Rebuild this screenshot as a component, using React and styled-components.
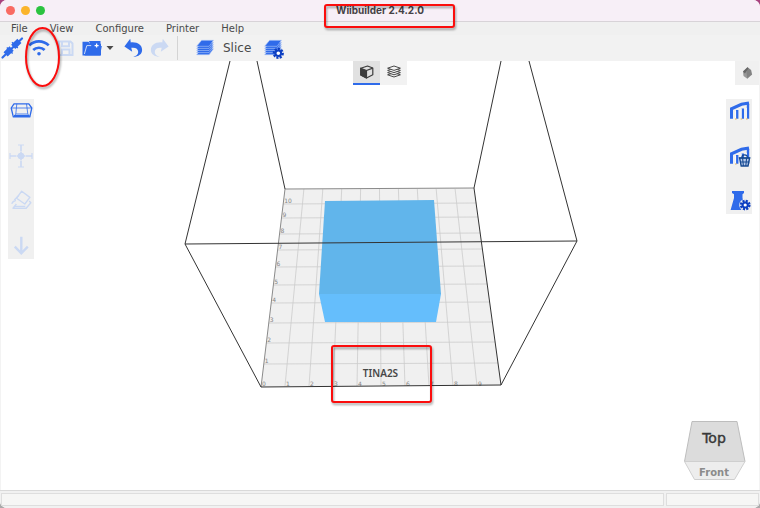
import React, { useState } from 'react';
import styled, { createGlobalStyle } from 'styled-components';

const BLUE = '#2f6bea';
const DARK_BLUE = '#0d3fc2';
const PALE = '#cbd9f3';

const GlobalStyle = createGlobalStyle`
    * {
        box-sizing: border-box;
    }
    body {
        margin: 0;
        background: linear-gradient(#a8437f 0, #a8437f 50%, #a9a9a9 50%);
        font-family: "DejaVu Sans", sans-serif;
        color: #4a4a4a;
    }
    button {
        font-family: inherit;
        color: inherit;
        border: 0;
        padding: 0;
        background: none;
        cursor: pointer;
    }
    svg {
        display: block;
    }
`

const Window = styled.div`
    position: relative;
    min-height: 100vh;
    display: flex;
    flex-direction: column;
    background: #ffffff;
    border-radius: 7px;
    overflow: hidden;
`

const TitleBar = styled.header`
    height: 22px;
    display: grid;
    grid-template-columns: 1fr auto 1fr;
    align-items: center;
    padding: 0 6px;
    background: #f7eff7;
    border-bottom: 1px solid #d8d3d8;
`

const TrafficLights = styled.div`
    display: flex;
    gap: 6px;
`

const Light = styled.button`
    width: 9px;
    height: 9px;
    border-radius: 50%;
    background: ${props => props.$color};
`

const Title = styled.h1`
    margin: 0;
    padding-bottom: 1px;
    font: 700 10px/18px Inter, sans-serif;
    color: #454245;
`

const MenuBar = styled.nav`
    height: 13px;
    display: flex;
    align-items: center;
    gap: 22px;
    padding: 0 11px;
    background: #f0f0f0;
`

const MenuItem = styled.button`
    font-size: 10px;
    line-height: 13px;
`

const Toolbar = styled.div`
    height: 26px;
    display: flex;
    align-items: center;
    gap: 3px;
    background: #f2f2f2;
`

const ToolGroup = styled.div`
    display: flex;
    align-items: center;
    margin-right: 3px;
`

const IconButton = styled.button`
    width: 24px;
    height: 24px;
    flex: none;

    &:disabled {
        cursor: default;
    }
`

const Caret = styled.button`
    width: 10px;
    height: 24px;
`

const Divider = styled.span`
    width: 1px;
    height: 24px;
    margin: 0 12px 0 2px;
    background: #d4d4d4;
`

const SliceButton = styled.button`
    display: flex;
    align-items: center;
    gap: 6px;
    margin-right: 8px;
    font-size: 12px;
    line-height: 24px;
`

const Viewport = styled.main`
    position: relative;
    flex: 1;
    display: flex;
    flex-direction: column;
    border-left: 1px solid #f3f3f3;
    border-right: 1px solid #f3f3f3;
`

const SceneSvg = styled.svg`
    position: absolute;
    inset: 0;
    width: 100%;
    height: 100%;
`

const TopRow = styled.div`
    position: relative;
    display: grid;
    grid-template-columns: 1fr auto 1fr;
`

const ViewTabs = styled.div`
    grid-column: 2;
    display: flex;
`

const ViewTab = styled.button`
    width: 27px;
    height: 24px;
    display: flex;
    justify-content: center;
    align-items: center;
    background: ${props => (props.$active ? '#e1e1e1' : '#f2f2f2')};
    border-bottom: 2px solid ${props => (props.$active ? BLUE : '#f2f2f2')};
`

const CornerButton = styled(IconButton)`
    justify-self: end;
    background: #f0f0f0;
`

const SideRow = styled.div`
    position: relative;
    display: flex;
    justify-content: space-between;
    align-items: flex-start;
    margin-top: 14px;
    padding: 0 7px;
`

const SidePanel = styled.div`
    display: flex;
    flex-direction: column;
    gap: 21px;
    padding: 0 1px 1px;
    background: #f0f0f0;
`

const ViewCubeButton = styled.button`
    position: relative;
    align-self: flex-end;
    margin: auto 13px 9px 0;
`

const StatusBar = styled.footer`
    height: 18px;
    display: flex;
    gap: 2px;
    padding: 2px 1px;
    background: #f1f1f1;
    border-top: 1px solid #d9d9d9;
`

const StatusCell = styled.div`
    flex: ${props => props.$flex};
    border: 1px solid #dedede;
    background: #f6f6f5;
`

const Annotations = styled.svg`
    position: absolute;
    inset: 0;
    width: 100%;
    height: 100%;
    pointer-events: none;
    filter: drop-shadow(1px 2px 1px rgba(0, 0, 0, .35));
`

const Icon = ({ size = 24, children, ...rest }) => (
    <svg width={size} height={size} viewBox={`0 0 ${size} ${size}`} fill="none" aria-hidden="true" {...rest}>
        {children}
    </svg>
)

const Gear = ({ x, y, r = 4 }) => (
    <g stroke={DARK_BLUE}>
        <circle cx={x} cy={y} r={r} strokeWidth="2.4" strokeDasharray="2.1 1.2" />
        <circle cx={x} cy={y} r={r - 1.6} strokeWidth="2" fill="#ffffff" />
    </g>
)

const PlugIcon = () => (
    <Icon stroke={BLUE}>
        <path d="M2.5 21.5 22 2.5" strokeWidth="2.2" strokeLinecap="round" />
        <path d="M5.6 18.3 11.6 12.5M13.2 10.8 19.4 4.9" strokeWidth="6" />
        <path d="m6.8 11.6 5.8 5.8M12 6.2l5.8 5.8" strokeWidth="1.4" />
    </Icon>
)

const WifiIcon = () => (
    <Icon stroke={BLUE} strokeWidth="2.7">
        <path d="M2.3 9.4C7.5 3.9 16.3 3.9 21.7 9.4" />
        <path d="M6.2 14c3-3 8.4-3 11.4 0" />
        <circle cx="12" cy="17.7" r="1.8" fill={BLUE} stroke="none" />
    </Icon>
)

const SaveIcon = () => (
    <Icon stroke={PALE} strokeWidth="2">
        <path d="M5 5.5h11.5l2 2V19H5z" />
        <path d="M8 5.5v4.7h7V5.5M8 19v-5.5h7.5V19" />
    </Icon>
)

const FolderIcon = () => (
    <Icon>
        <path d="M1.5 5.7h6l1.5 2h11v11.8H1.5z" fill={BLUE} />
        <path d="M8 5h11.5v3H9z" fill={BLUE} />
        <path d="M3.6 19 6 10h14.8l-1.7 9.5H3.6z" fill={BLUE} />
        <path d="M15.6 7.6v4M13.6 9.6h4" stroke="#ffffff" strokeWidth="1.3" />
        <path d="M3.4 18 5.8 9.6h4.4" stroke="#dce6fb" strokeWidth=".9" />
    </Icon>
)

const UndoIcon = ({ flip, color }) => (
    <Icon>
        <g transform={flip ? 'translate(24 0) scale(-1 1)' : undefined} fill={color}>
            <path d="M3.4 10.6 9.2 2.8l.6 3.6c7-.6 11.3 2.8 11.3 7.6 0 4-3.4 6.7-8.9 6.9 3.4-1 5-2.8 5-5 0-3.2-2.8-4.7-6.9-4.1l.9 4z" />
        </g>
    </Icon>
)

const StackShape = () => (
    <g strokeWidth=".6" stroke="#b4c9f7" fill={BLUE}>
        {[8.4, 6.3, 4.2, 2.1, 0].map(dy => (
            <path key={dy} d={`M8.6 ${4.3 + dy}h11.9l-4.4 6H3.6z`} />
        ))}
    </g>
)

const StackIcon = () => (
    <Icon><StackShape /></Icon>
)

const StackGearIcon = () => (
    <Icon>
        <g transform="translate(-1 0)"><StackShape /></g>
        <Gear x={16.3} y={17.3} r={4.4} />
    </Icon>
)

const PerspectiveIcon = () => (
    <Icon stroke={BLUE} strokeWidth="1.3" strokeLinejoin="round">
        <path d="M5 4.8h14.8l3 4.2-2 8.8H4.3L2.2 9z" />
        <path d="M2.2 9h20.6M7.8 4.8 6.8 15h12L17.5 4.8M6.8 15l-2.5 2.8M18.8 15l2 2.8" strokeWidth=".8" />
        <path d="M5 17h15.4" strokeWidth="2.2" />
    </Icon>
)

const MoveIcon = () => (
    <Icon stroke={PALE} strokeWidth="1.6">
        <circle cx="12" cy="12" r="3.3" fill={PALE} stroke="none" />
        <path d="M12 1v6M12 17v6M1 12h6M17 12h6M7.5 12h9M12 7.5v9" />
        <path d="M9 1h6M9 23h6M1 9v6M23 9v6" strokeWidth="1.2" />
    </Icon>
)

const LayFlatIcon = () => (
    <Icon stroke={PALE} strokeWidth="1.4" strokeLinejoin="round">
        <path d="m12.7 2.2 8.2 6.2-5.1 6.6-8.2-5.8z" />
        <path d="M10 6.2 5.3 11M2.7 14.8c.7-2 2-3 4.2-3.6M7.4 15 4 19.3h13.2l4.6-5.5-1.6-1.7" />
        <path d="M5.5 17.4h10.8" />
    </Icon>
)

const DownIcon = () => (
    <Icon stroke={PALE} strokeWidth="2.4">
        <path d="M12.3 2.7V19M5.8 12.7l6.5 6.6 6.5-6.6" />
    </Icon>
)

const SupportShape = () => (
    <>
        <path d="M4.5 19.7V9.8L14.5 5.3 22 4" stroke={BLUE} strokeWidth="3" />
        <path d="M10.2 11v8.7M15.8 9.5v10.2M21 5v14.7" stroke={BLUE} strokeWidth="2.4" />
        <path d="M8.6 12v7.7M14.2 10v9.7M19.4 9v10.7" stroke="#ffffff" strokeWidth=".8" />
        <path d="M8 20h1.6M13.6 20h1.6M19 20h1.6" stroke="#e3b35a" strokeWidth="1" />
    </>
)

const SupportIcon = () => (
    <Icon><SupportShape /></Icon>
)

const ClearSupportIcon = () => (
    <Icon>
        <SupportShape />
        <path d="M12.6 14h10l-1.6 8h-6.8z" stroke="#174a91" strokeWidth="1.4" fill="#b9cbea" />
        <path d="M15.6 14 16.4 22M19.6 14 18.8 22M13 18h9.2M14.8 13.7a2.8 2.8 0 0 1 5.6 0M11.8 14h11.4" stroke="#174a91" strokeWidth="1.1" />
    </Icon>
)

const FlaskGearIcon = () => (
    <Icon>
        <path d="M5 2h12v2l-1.5 1.2V9l3.2 12H3.6L7 9V5.2L5 4z" fill={BLUE} />
        <circle cx="18.2" cy="16" r="6" fill="#f0f0f0" />
        <Gear x={18.2} y={16} r={4.2} />
    </Icon>
)

const SolidIcon = () => (
    <Icon size={14} stroke="#3d3d3d" strokeWidth="1.2" strokeLinejoin="round">
        <path d="M7.5 1 12.8 3v6.8L6.5 13 .8 10V3.2z" />
        <path d="m.8 3.2 5.7 2.3V13L.8 10z" fill="#3d3d3d" />
        <path d="m6.5 5.5 6.3-2.4" />
    </Icon>
)

const LayersIcon = () => (
    <Icon size={14} stroke="#4a4a4a" strokeLinejoin="round" fill="#f2f2f2">
        {[6.6, 4.4, 2.2, 0].map(dy => (
            <path key={dy} d={`M.6 ${3.2 + dy} 7 ${1 + dy}l6.4 2.2L7 ${5.4 + dy}z`} />
        ))}
    </Icon>
)

const BlockIcon = () => (
    <Icon>
        <path d="m8 10.5 4.5-4.3 2 5.3-2.2 6.2-3.8-2.6z" fill="#999999" />
        <path d="m12.5 6.2 3.6 2.8 1 4.5-4.8 4.2-.8-6z" fill="#838383" />
        <path d="m8 10.5 4.5-4.3 1 1-3.6 5.3z" fill="#666666" />
    </Icon>
)

const menus = ['File', 'View', 'Configure', 'Printer', 'Help']

const modelTools = [
    { label: 'Perspective', icon: <PerspectiveIcon /> },
    { label: 'Move', icon: <MoveIcon />, disabled: true },
    { label: 'Lay flat', icon: <LayFlatIcon />, disabled: true },
    { label: 'Drop to bed', icon: <DownIcon />, disabled: true },
]

const supportTools = [
    { label: 'Add support', icon: <SupportIcon /> },
    { label: 'Clear support', icon: <ClearSupportIcon /> },
    { label: 'Material settings', icon: <FlaskGearIcon /> },
]

// y of each centimetre line at the left edge of the bed, front to back
const rows = [387, 364, 343, 323, 303, 285, 267, 250, 234, 218, 204]
const bedLeft = y => 261 + (387 - y) * 24 / 198

const Bed = () => (
    <g>
        <path d="M285 189 474 188 501 385 261 387z" fill="#f0f0f0" />
        <g stroke="#cbcbcb" strokeWidth=".8">
            {rows.slice(1).map(y => (
                <path key={y} d={`M${bedLeft(y)} ${y}L${501 - (386 - y) * 27 / 198} ${y - 1}`} />
            ))}
            {[1, 2, 3, 4, 5, 6, 7, 8, 9].map(i => (
                <path key={i} d={`M${261 + i * 24} 386L${285 + i * 18.9} 189`} />
            ))}
        </g>
        <g fill="#858585" fontSize="6">
            {rows.map((y, i) => (
                <text key={y} x={bedLeft(y) + 1} y={y - 1}>{i}</text>
            ))}
            {[1, 2, 3, 4, 5, 6, 7, 8, 9].map(i => (
                <text key={i} x={262 + i * 24} y="386">{i}</text>
            ))}
        </g>
        <path d="M261 387 285 189 474 188" stroke="#8a8a8a" fill="none" />
    </g>
)

const Scene = () => (
    <SceneSvg viewBox="1 61 758 429" role="img" aria-label="Build plate">
        <Bed />
        <path d="M325 201 434 200 441 294 319 294z" fill="#61b5eb" />
        <path d="M319 294H441L436 322 325 322z" fill="#65befc" />
        <g stroke="#333333" fill="none">
            <path d="M257 61 285 189M501 61 474 188 501 385" />
            <path d="M230 61 185 244 577 241 529 61" />
            <path d="M185 244 261 387 501 385 577 241" />
        </g>
        <text x="380.5" y="377" textAnchor="middle" fontFamily="Noto Sans, sans-serif" fontSize="10" fontWeight="600" fill="#474747">TINA2S</text>
    </SceneSvg>
)

const ViewCube = () => (
    <svg width="62" height="60" viewBox="0 0 62 60" textAnchor="middle">
        <path d="M8 .5H53L61 40.5H.5z" fill="#dcdcdc" stroke="#bdbdbd" />
        <path d="M.5 40.5H61L50.5 58.5H10.5z" fill="#ededed" stroke="#cfcfcf" />
        <text x="30" y="22" fontSize="14" fill="#383838" stroke="#383838" strokeWidth=".4">Top</text>
        <text x="30" y="55" fontSize="10" fontWeight="700" fill="#8b8b8b">Front</text>
    </svg>
)

const ToolButton = ({ label, disabled, children }) => (
    <IconButton aria-label={label} disabled={disabled}>{children}</IconButton>
)

const App = () => {
    const [view, setView] = useState('solid')

    return (
    <>
        <GlobalStyle />
        <Window>
            <TitleBar>
                <TrafficLights>
                    <Light $color="#f96a63" aria-label="Close" />
                    <Light $color="#fbb42c" aria-label="Minimize" />
                    <Light $color="#2bc340" aria-label="Zoom" />
                </TrafficLights>
                <Title>Wiibuilder 2.4.2.0</Title>
            </TitleBar>
            <MenuBar>
                {menus.map(menu => <MenuItem key={menu}>{menu}</MenuItem>)}
            </MenuBar>
            <Toolbar>
                <ToolButton label="Connect"><PlugIcon /></ToolButton>
                <ToolButton label="Wi-Fi"><WifiIcon /></ToolButton>
                <ToolButton label="Save" disabled><SaveIcon /></ToolButton>
                <ToolGroup>
                    <ToolButton label="Open"><FolderIcon /></ToolButton>
                    <Caret aria-label="Recent files">
                        <svg width="10" height="24" viewBox="0 0 10 24"><path d="M1.5 10h7L5 14z" fill="#4a4a4a" /></svg>
                    </Caret>
                </ToolGroup>
                <ToolButton label="Undo"><UndoIcon color={BLUE} /></ToolButton>
                <ToolButton label="Redo" disabled><UndoIcon color={PALE} flip /></ToolButton>
                <Divider />
                <SliceButton><StackIcon />Slice</SliceButton>
                <ToolButton label="Slice settings"><StackGearIcon /></ToolButton>
            </Toolbar>
            <Viewport>
                <Scene />
                <TopRow>
                    <ViewTabs>
                        <ViewTab $active={view === 'solid'} onClick={() => setView('solid')} aria-label="Solid view"><SolidIcon /></ViewTab>
                        <ViewTab $active={view === 'layers'} onClick={() => setView('layers')} aria-label="Layer view"><LayersIcon /></ViewTab>
                    </ViewTabs>
                    <CornerButton aria-label="Models"><BlockIcon /></CornerButton>
                </TopRow>
                <SideRow>
                    <SidePanel>
                        {modelTools.map(tool => (
                            <ToolButton key={tool.label} label={tool.label} disabled={tool.disabled}>{tool.icon}</ToolButton>
                        ))}
                    </SidePanel>
                    <SidePanel>
                        {supportTools.map(tool => (
                            <ToolButton key={tool.label} label={tool.label}>{tool.icon}</ToolButton>
                        ))}
                    </SidePanel>
                </SideRow>
                <ViewCubeButton aria-label="View cube"><ViewCube /></ViewCubeButton>
            </Viewport>
            <StatusBar>
                <StatusCell $flex="7 1 0" />
                <StatusCell $flex="0 0 93px" />
            </StatusBar>
            <Annotations viewBox="0 0 760 508" fill="none" stroke="#fb0d0d" strokeWidth="2" aria-hidden="true">
                <ellipse cx="42.5" cy="57" rx="16.5" ry="29" />
                <rect x="325" y="5" width="129" height="22" rx="2" />
                <rect x="332" y="346" width="99" height="56" rx="2" />
            </Annotations>
        </Window>
    </>
    )
}

export default App;
